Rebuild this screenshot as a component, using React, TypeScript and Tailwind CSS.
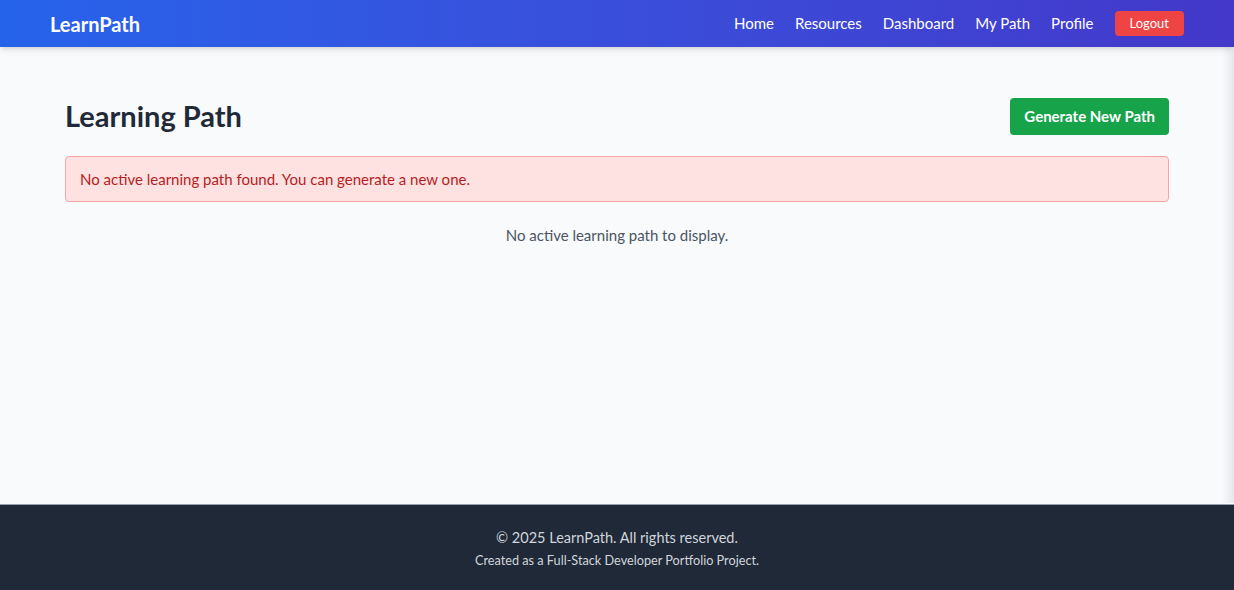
import React from 'react';

const navLinks = ['Home', 'Resources', 'Dashboard', 'My Path', 'Profile'];

const Header: React.FC = () => (
  <header className="relative z-10 bg-gradient-to-r from-[#2563eb] to-[#4338ca] shadow-md">
    <nav className="flex h-[47px] items-center justify-between px-[50px]">
      <a href="#" className="text-xl font-bold text-white">LearnPath</a>
      <div className="flex items-center gap-[21px]">
        {navLinks.map((link) => (
          <a key={link} href="#" className="text-[15px] text-white">
            {link}
          </a>
        ))}
        <button className="rounded bg-[#ef4444] px-[15px] py-[3px] text-[13px] leading-[19px] text-white">
          Logout
        </button>
      </div>
    </nav>
  </header>
);

const Footer: React.FC = () => (
  <footer className="border-t border-gray-400 bg-[#1f2937] pt-[21px] pb-[20px] text-center text-gray-300">
    <p className="text-[14.5px] leading-6">© 2025 LearnPath. All rights reserved.</p>
    <p className="text-[12.7px] leading-5">Created as a Full-Stack Developer Portfolio Project.</p>
  </footer>
);

export default function App() {
  return (
    <div className="relative flex min-h-screen flex-col bg-[#f8fafc] font-['Segoe_UI','Lato',sans-serif]">
      <Header />
      <main className="flex-1">
        <div className="mx-auto max-w-6xl px-6 py-[51px]">
          <div className="mb-[21px] flex items-center justify-between">
            <h1 className="text-[29px] leading-9 font-bold text-[#1f2937]">Learning Path</h1>
            <button className="rounded bg-[#16a34a] px-[14px] py-[7px] text-[15px] font-bold text-white">
              Generate New Path
            </button>
          </div>
          <div className="rounded border border-[#f8a4a4] bg-[#fee2e2] px-[14px] py-[11px] text-[15px] text-[#b91c1c]">
            No active learning path found. You can generate a new one.
          </div>
          <p className="mt-[22px] text-center text-[15px] text-[#4b5563]">
            No active learning path to display.
          </p>
        </div>
      </main>
      <Footer />
      <div className="pointer-events-none absolute top-[47px] right-0 bottom-[87px] w-[12px] bg-gradient-to-r from-transparent to-[#e5e7eb]" />
    </div>
  );
}
